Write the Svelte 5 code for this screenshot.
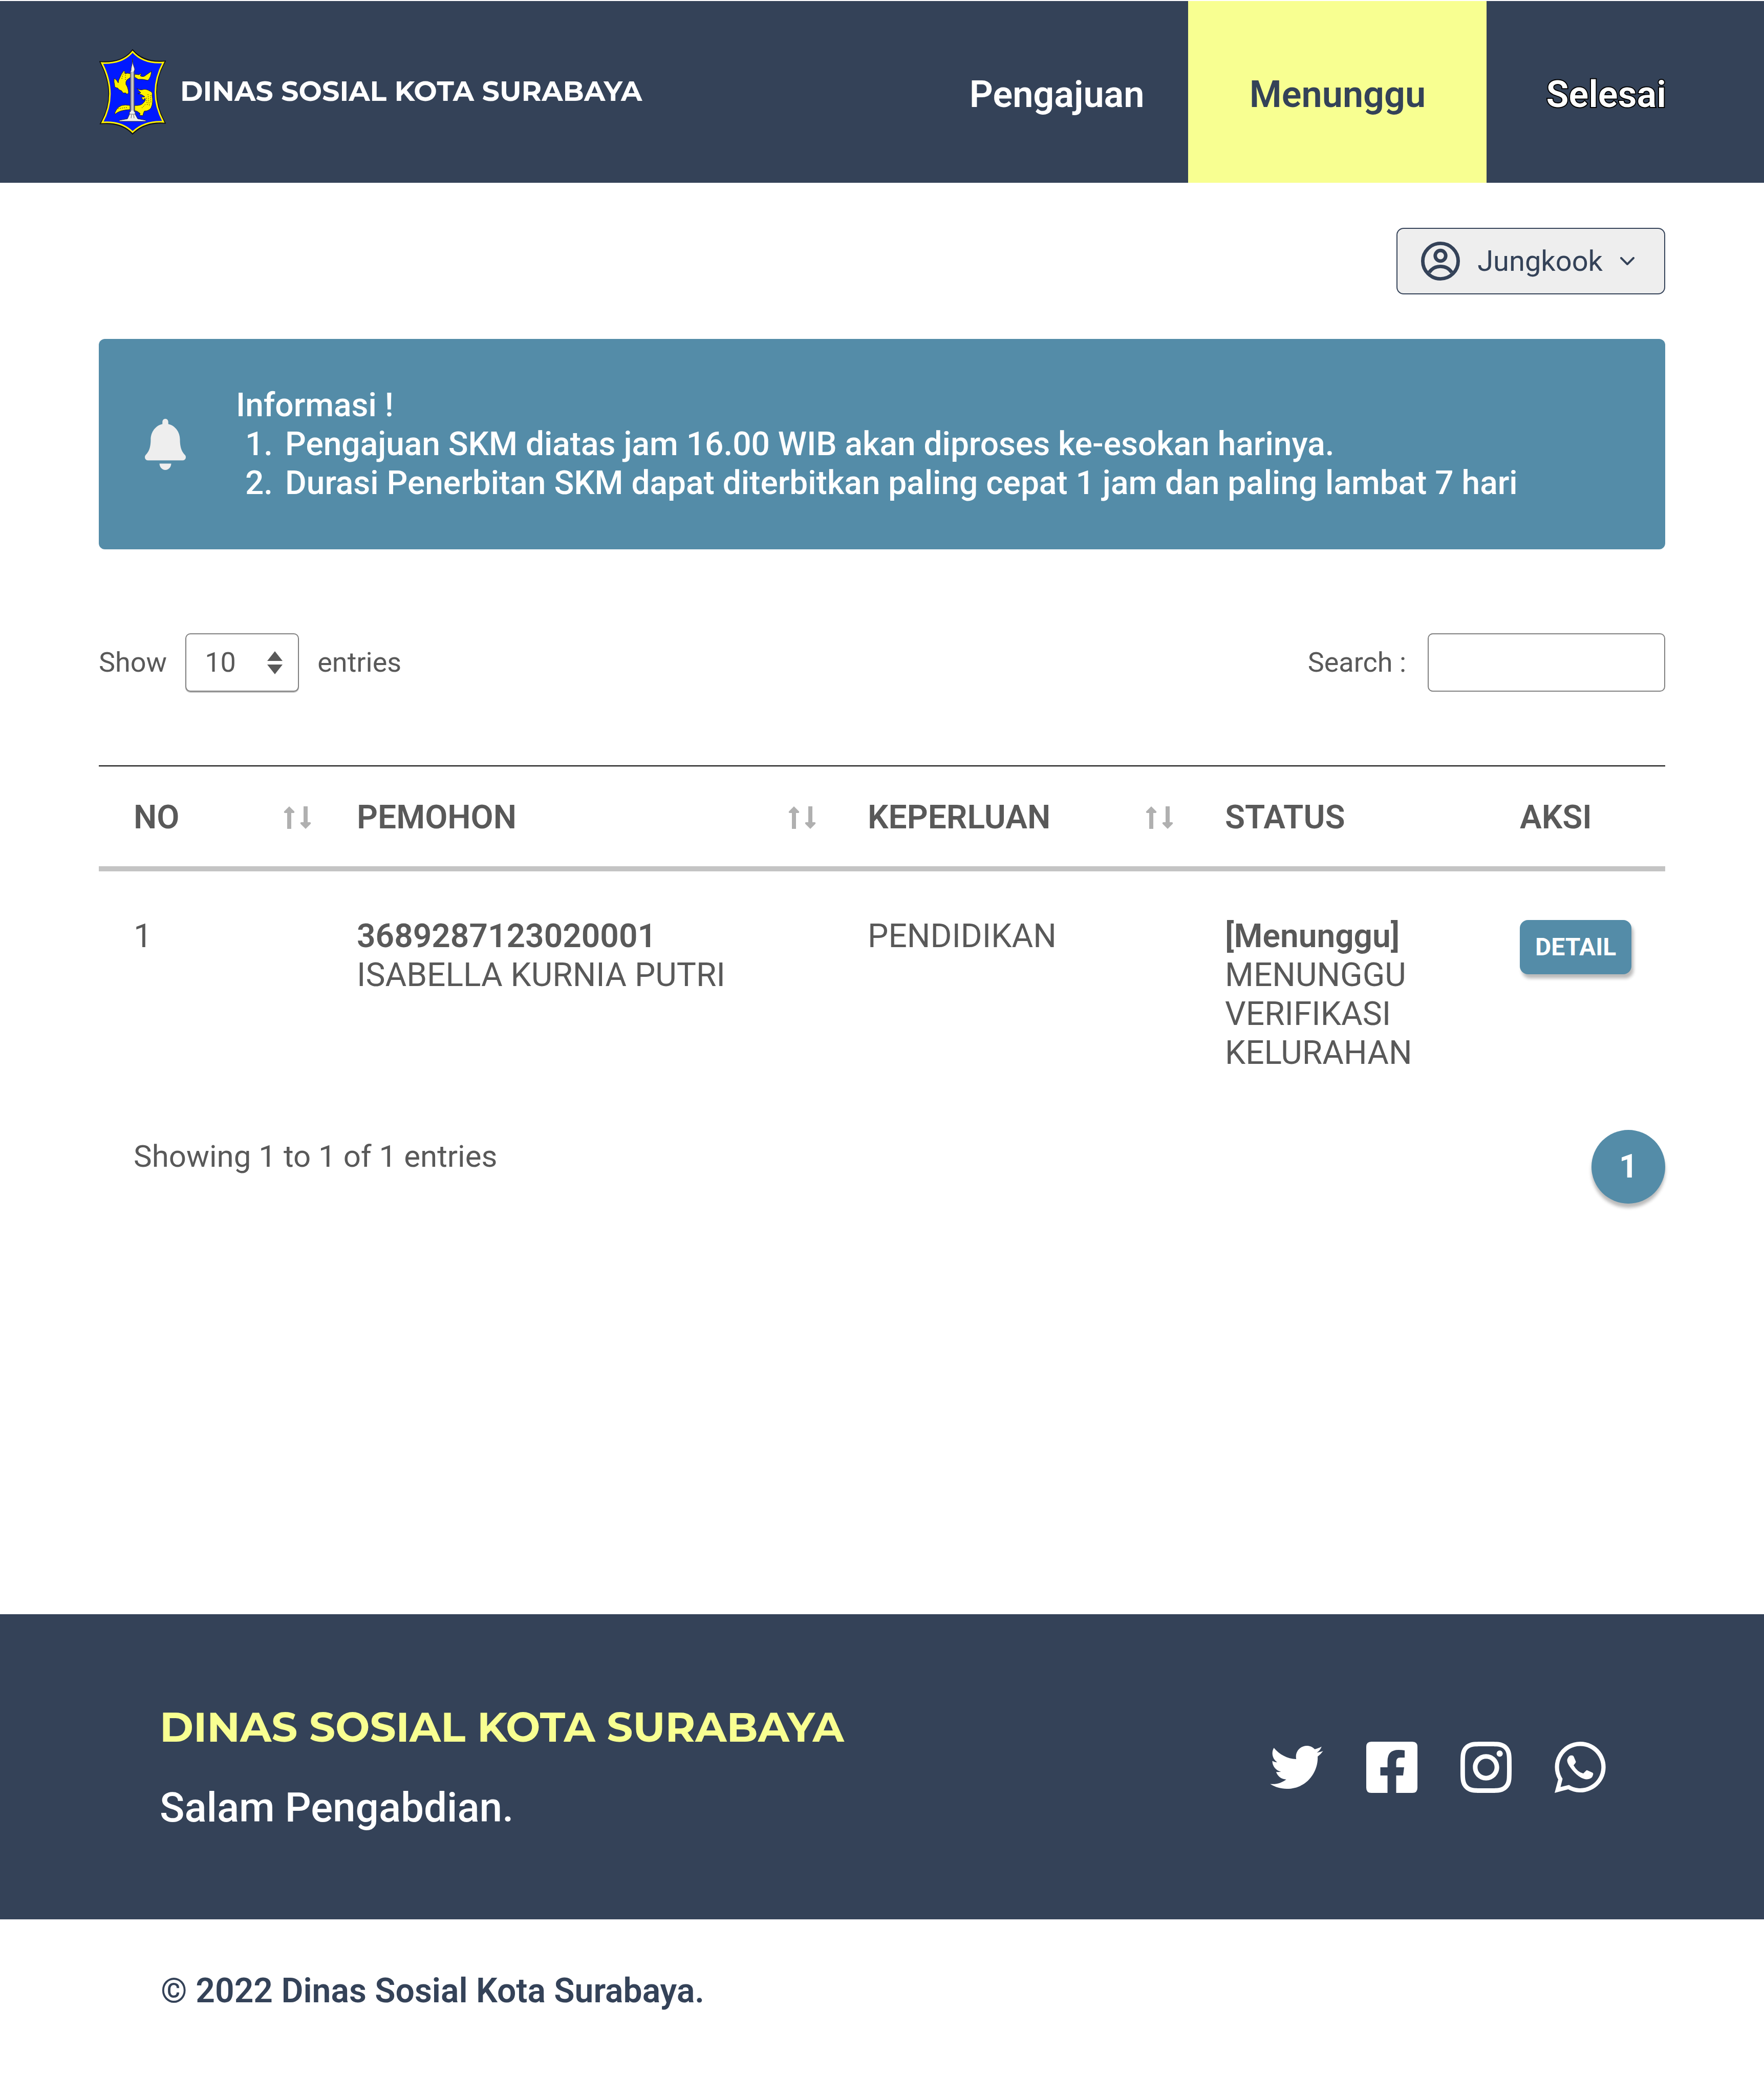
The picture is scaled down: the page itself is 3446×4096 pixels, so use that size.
<script>
  const cols = [
    { label: 'NO', sort: true },
    { label: 'PEMOHON', sort: true },
    { label: 'KEPERLUAN', sort: true },
    { label: 'STATUS', sort: false },
    { label: 'AKSI', sort: false }
  ];
  const rows = [
    { no: '1', nik: '3689287123020001', name: 'ISABELLA KURNIA PUTRI', need: 'PENDIDIKAN', state: '[Menunggu]', detail: 'MENUNGGU VERIFIKASI KELURAHAN' }
  ];
</script>

<header class="topbar">
  <a class="brand" href="#home">
    <svg class="crest" viewBox="0 0 130 167" aria-hidden="true">
      <path d="M65 2Q46 28 2 25Q36 88 3 145Q44 142 65 165Q88 142 128 144Q94 84 128 24Q86 27 65 2Z" fill="#0019ff" stroke="#111" stroke-width="3" />
      <path d="M65 5Q45 29 5 27Q36 88 6 143Q44 140 65 162Q88 140 125 142Q94 84 125 26Q86 29 65 5Z" fill="#0019ff" stroke="#fff200" stroke-width="3" />
      <g fill="#fff200" stroke="#222" stroke-width="1" stroke-linejoin="round">
        <path d="M61 48Q55 46 50 48Q51 44 48 42Q43 48 40 56Q37 61 37 66Q34 59 29 57Q28 64 30 71Q29 75 36 76Q38 80 43 81L47 86Q53 84 53 88Q58 87 57 84Q56 74 52 69Q51 63 54 60L61 55Z" />
        <path d="M69 49L78 50Q80 47 82 48L80 52Q86 56 92 50Q98 46 102 43Q101 55 95 61Q84 58 76 59Q72 56 69 55Z" />
        <path d="M73 76Q79 81 85 79Q91 77 99 82Q105 84 103 90Q106 104 101 115Q96 121 88 121Q86 124 85 130L78 129L80 126Q74 120 69 120V110Q82 111 86 105Q92 99 89 96Q87 98 86 100L82 94L89 93Q84 88 75 87Q80 87 81 85Q76 80 73 76Z" />
        <path d="M60 110Q40 106 33 119Q29 126 31 127Q39 119 60 118Z" />
      </g>
      <path d="M95 88L98 112M100 90L101 106M90 108L83 115M92 95L94 110M36 116L54 114M49 45Q44 52 44 60M51 46V60" stroke="#443f00" stroke-width="1" stroke-dasharray="2 2" fill="none" />
      <path d="M65 18L66 29L69 38V42H68V122H70V127L75 136L91 139V141H39V139L55 136L59 127V122H61V42H62V38L64 29Z" fill="#eee" stroke="#333" stroke-width="1" />
      <path d="M63 44V120M66 44V120M59 127H71M63 128L62 135M67 128L68 135" stroke="#666" stroke-width="1" />
    </svg>
    <span class="wordmark">DINAS SOSIAL KOTA SURABAYA</span>
  </a>
  <nav class="nav" aria-label="Utama">
    <a href="#pengajuan">Pengajuan</a>
    <a href="#menunggu" class="active" aria-current="page">Menunggu</a>
    <a href="#selesai" class="outlined">Selesai</a>
  </nav>
</header>

<main>
  <div class="account">
    <button class="user" type="button">
      <svg class="avatar" viewBox="2 2 20 20" aria-hidden="true">
        <circle cx="12" cy="12" r="9.1" />
        <circle cx="12" cy="9.25" r="2.7" />
        <path d="M6.2 17.8A7.04 7.04 0 0 1 17.8 17.8" />
      </svg>
      <span>Jungkook</span>
      <svg class="chevron" viewBox="0 0 28 16" aria-hidden="true"><path d="M2 2L14 14L26 2" /></svg>
    </button>
  </div>

  <section class="notice">
    <svg class="bell" viewBox="0 0 448 512" preserveAspectRatio="none" aria-hidden="true">
      <path d="M224 512c35.320 0 63.970-28.650 63.970-64H160.030c0 35.350 28.650 64 63.970 64zm215.390-149.710c-19.320-20.760-55.470-51.990-55.470-154.290 0-77.700-54.480-139.900-127.940-155.160V32c0-17.670-14.320-32-31.980-32s-31.980 14.330-31.980 32v20.840C118.560 68.100 64.080 130.300 64.080 208c0 102.300-36.150 133.530-55.470 154.290-6 6.450-8.660 14.160-8.610 21.710.11 16.400 12.980 32 32.100 32h383.800c19.120 0 32-15.600 32.100-32 .05-7.550-2.610-15.270-8.610-21.710z" />
    </svg>
    <div>
      <p>Informasi !</p>
      <ol>
        <li>Pengajuan SKM diatas jam 16.00 WIB akan diproses ke-esokan harinya.</li>
        <li>Durasi Penerbitan SKM dapat diterbitkan paling cepat 1 jam dan paling lambat 7 hari</li>
      </ol>
    </div>
  </section>

  <div class="controls">
    <div class="length">
      <label for="len">Show</label>
      <span class="picker">
        <select id="len"><option>10</option><option>25</option></select>
        <svg viewBox="0 0 30 45" aria-hidden="true"><path d="M15 0L30 19H0ZM0 26H30L15 45Z" /></svg>
      </span>
      <label for="len">entries</label>
    </div>
    <div class="search">
      <label for="q">Search :</label>
      <input id="q" type="search" />
    </div>
  </div>

  <table>
    <colgroup><col class="c1" /><col class="c2" /><col class="c3" /><col class="c4" /><col class="c5" /></colgroup>
    <thead>
      <tr>
        {#each cols as col}
          <th scope="col">
            <div class="head">
              <span>{col.label}</span>
              {#if col.sort}
                <button type="button" class="sort" aria-label="Urutkan {col.label}">
                  <svg viewBox="0 0 54 44" aria-hidden="true">
                    <path d="M11 0L21 10Q22 13 19 13H15V44H7V13H3Q0 13 1 10ZM39 0H47V31H51Q54 31 53 34L43 44L33 34Q32 31 35 31H39Z" />
                  </svg>
                </button>
              {/if}
            </div>
          </th>
        {/each}
      </tr>
    </thead>
    <tbody>
      {#each rows as row}
        <tr>
          <td>{row.no}</td>
          <td><strong>{row.nik}</strong>{row.name}</td>
          <td>{row.need}</td>
          <td><strong>{row.state}</strong><span class="state">{row.detail}</span></td>
          <td><button type="button" class="detail">DETAIL</button></td>
        </tr>
      {/each}
    </tbody>
  </table>

  <div class="paging">
    <p>Showing 1 to 1 of 1 entries</p>
    <button type="button" class="page" aria-current="page">1</button>
  </div>
</main>

<footer>
  <div class="band">
    <div>
      <h2>DINAS SOSIAL KOTA SURABAYA</h2>
      <p class="motto">Salam Pengabdian.</p>
    </div>
    <div class="social">
      <a href="#twitter" aria-label="Twitter">
        <svg class="bird" viewBox="0 48 512 416" aria-hidden="true"><path d="M459.370 151.716c.325 4.548.325 9.097.325 13.645 0 138.720-105.583 298.558-298.558 298.558-59.452 0-114.680-17.219-161.137-47.106 8.447.974 16.568 1.299 25.340 1.299 49.055 0 94.213-16.568 130.274-44.832-46.132-.975-84.792-31.188-98.112-72.772 6.498.974 12.995 1.624 19.818 1.624 9.421 0 18.843-1.300 27.614-3.573-48.081-9.747-84.143-51.980-84.143-102.985v-1.299c13.969 7.797 30.214 12.670 47.431 13.319-28.264-18.843-46.781-51.005-46.781-87.391 0-19.492 5.197-37.360 14.294-52.954 51.655 63.675 129.300 105.258 216.365 109.807-1.624-7.797-2.599-15.918-2.599-24.040 0-57.828 46.782-104.934 104.934-104.934 30.213 0 57.502 12.670 76.670 33.137 23.715-4.548 46.456-13.320 66.599-25.340-7.798 24.366-24.366 44.833-46.132 57.827 21.117-2.273 41.584-8.122 60.426-16.243-14.292 20.791-32.161 39.308-52.628 54.253z" /></svg>
      </a>
      <a href="#facebook" aria-label="Facebook">
        <svg viewBox="0 0 100 100" aria-hidden="true"><path d="M10 0H90Q100 0 100 10V90Q100 100 90 100H58.500V66H72L74 50H58.500V40Q58.500 31 66 31H75V17Q70 16 63 16Q41.500 16 41.500 38V50H27.500V66H41.500V100H10Q0 100 0 90V10Q0 0 10 0Z" /></svg>
      </a>
      <a href="#instagram" aria-label="Instagram">
        <svg viewBox="0 0 24 24" aria-hidden="true"><path d="M12 0C8.740 0 8.333.015 7.053.072 5.775.132 4.905.333 4.140.630c-.789.306-1.459.717-2.126 1.384S.935 3.350.630 4.140C.333 4.905.131 5.775.072 7.053.012 8.333 0 8.740 0 12s.015 3.667.072 4.947c.06 1.277.261 2.148.558 2.913.306.788.717 1.459 1.384 2.126.667.666 1.336 1.079 2.126 1.384.766.296 1.636.499 2.913.558C8.333 23.988 8.740 24 12 24s3.667-.015 4.947-.072c1.277-.06 2.148-.262 2.913-.558.788-.306 1.459-.718 2.126-1.384.666-.667 1.079-1.335 1.384-2.126.296-.765.499-1.636.558-2.913.06-1.280.072-1.687.072-4.947s-.015-3.667-.072-4.947c-.06-1.277-.262-2.149-.558-2.913-.306-.789-.718-1.459-1.384-2.126C21.319 1.347 20.651.935 19.860.630c-.765-.297-1.636-.499-2.913-.558C15.667.012 15.260 0 12 0zm0 2.160c3.203 0 3.585.016 4.850.071 1.170.055 1.805.249 2.227.415.562.217.960.477 1.382.896.419.420.679.819.896 1.381.164.422.360 1.057.413 2.227.057 1.266.070 1.646.070 4.850s-.015 3.585-.074 4.850c-.061 1.170-.256 1.805-.421 2.227-.224.562-.479.960-.899 1.382-.419.419-.824.679-1.380.896-.420.164-1.065.360-2.235.413-1.274.057-1.649.070-4.859.070-3.211 0-3.586-.015-4.859-.074-1.171-.061-1.816-.256-2.236-.421-.569-.224-.960-.479-1.379-.899-.421-.419-.690-.824-.900-1.380-.165-.420-.359-1.065-.420-2.235-.045-1.260-.061-1.649-.061-4.844 0-3.196.016-3.586.061-4.861.061-1.170.255-1.814.420-2.234.210-.570.479-.960.900-1.381.419-.419.810-.689 1.379-.898.420-.166 1.051-.361 2.221-.421 1.275-.045 1.650-.060 4.859-.060l.045.030zm0 3.678c-3.405 0-6.162 2.760-6.162 6.162 0 3.405 2.760 6.162 6.162 6.162 3.405 0 6.162-2.760 6.162-6.162 0-3.405-2.760-6.162-6.162-6.162zM12 16c-2.210 0-4-1.790-4-4s1.790-4 4-4 4 1.790 4 4-1.790 4-4 4zm7.846-10.405c0 .795-.646 1.440-1.440 1.440-.795 0-1.440-.646-1.440-1.440 0-.794.646-1.439 1.440-1.439.793-.001 1.440.645 1.440 1.439z" /></svg>
      </a>
      <a href="#whatsapp" aria-label="WhatsApp">
        <svg viewBox="0 0 100 100" aria-hidden="true">
          <path fill-rule="evenodd" d="M50 0A49.500 49.500 0 1 1 26.500 93L0 100L7 74A49.500 49.500 0 0 1 50 0ZM50 8.500A41.200 41.200 0 0 0 15.500 72.500L11.500 88.500L28 84.500A41.200 41.200 0 1 0 50 8.500Z" />
          <path d="M29.500 27.500Q31 26.500 35 27Q36.500 27 37.500 29.500L41.500 39Q42 40.500 37 46Q44 59 56 62L62 56Q63 55.500 64 56L74 60.500Q76 61.500 75 65Q73 73 63 73.500Q50 73 36 57Q24 43 24.500 36Q25 31 29.500 27.500Z" />
        </svg>
      </a>
    </div>
  </div>
  <p class="copy">© 2022 Dinas Sosial Kota Surabaya.</p>
</footer>

<style>
  :global(body) { background: #fff; }
  :global(#app) {
    min-height: 100vh;
    display: flex;
    flex-direction: column;
    font-family: Roboto, sans-serif;
    font-size: 64px;
    line-height: 76px;
    color: #595959;
  }
  p, h2, ol { margin: 0; }
  a { color: inherit; text-decoration: none; }
  button, input, select { font: inherit; color: inherit; }
  button { border: 0; padding: 0; cursor: pointer; }
  svg { display: block; fill: currentColor; }

  .topbar {
    display: flex;
    justify-content: space-between;
    margin-top: 2px;
    padding-left: 194px;
    background: #344258;
    color: #fff;
  }
  .brand { display: flex; align-items: center; gap: 28px; }
  .crest { width: 130px; height: 167px; }
  .wordmark { padding-bottom: 4px; font: 700 54px/68px Montserrat, Inter, sans-serif; }
  .nav { display: flex; font-size: 72px; font-weight: 600; line-height: 84px; }
  .nav a { display: flex; align-items: center; padding: 141px 86px 130px; }
  .nav .active { width: 583px; box-sizing: border-box; padding-inline: 0; justify-content: center; background: #f8ff91; color: #344258; }
  .nav .outlined { padding: 141px 191px 130px 116px; -webkit-text-stroke: 4px #000; paint-order: stroke fill; }

  main { flex: 1; padding: 88px 193px 0; }
  .account { display: flex; justify-content: flex-end; }
  .user {
    display: flex;
    align-items: center;
    height: 130px;
    padding: 0 58px 0 46px;
    border: 2px solid #344258;
    border-radius: 14px;
    background: #eee;
    color: #344258;
    font-size: 56px;
    gap: 34px;
  }
  .avatar, .chevron { fill: none; stroke: currentColor; }
  .avatar { width: 76px; height: 76px; stroke-width: 1.8; }
  .chevron { width: 28px; height: 16px; stroke-width: 4; stroke-linecap: round; stroke-linejoin: round; }

  .notice {
    display: flex;
    align-items: center;
    gap: 98px;
    margin-top: 87px;
    padding: 92px 90px 91px;
    border-radius: 12px;
    background: #548ca8;
    color: #fff;
    font-weight: 500;
  }
  .bell { flex: none; width: 80px; height: 100px; color: #eee; }
  ol { padding-left: 88px; }
  li { padding-left: 8px; }

  .controls { display: flex; justify-content: space-between; margin-top: 164px; font-size: 54px; }
  .length, .search { display: flex; align-items: center; gap: 36px; }
  .search { gap: 42px; }
  .picker { display: grid; align-items: center; width: 222px; }
  .picker select, .picker svg { grid-area: 1 / 1; }
  .picker svg { width: 30px; height: 45px; justify-self: end; margin-right: 32px; pointer-events: none; }
  select, input {
    box-sizing: border-box;
    height: 114px;
    border: 2px solid #7f7f7f;
    border-radius: 10px;
    background: #fff;
    appearance: none;
  }
  select { width: 100%; padding: 0 36px; box-shadow: 0 2px 1px #bbb; }
  input { width: 464px; padding: 0 24px; }

  table { width: 100%; margin-top: 144px; border-collapse: separate; border-spacing: 0; table-layout: fixed; border-top: 2px solid #000; }
  .c1 { width: 471px; }
  .c2 { width: 998px; }
  .c3 { width: 698px; }
  .c5 { width: 317px; }
  th, td { padding: 0 0 0 33px; text-align: left; vertical-align: top; }
  th:first-child, td:first-child { padding-left: 68px; }
  th { font-weight: 600; border-bottom: 10px solid #c4c4c4; }
  .head { display: flex; align-items: center; justify-content: space-between; padding: 62px 68px 57px 0; }
  th:first-child .head { padding-right: 56px; }
  .sort { background: none; color: #b0b0b0; }
  .sort svg { width: 54px; height: 44px; }
  td { padding-top: 89px; }
  strong { display: block; font-weight: 600; }
  .state { display: block; max-width: 400px; }
  .detail {
    display: block;
    margin-top: 6px;
    padding: 0 30px;
    height: 106px;
    border-radius: 16px;
    background: #548ca8;
    box-shadow: 4px 8px 6px #bbb;
    color: #fff;
    font-size: 48px;
    font-weight: 700;
  }

  .paging { display: flex; justify-content: space-between; margin-top: 112px; padding-left: 68px; font-size: 60px; }
  .paging p { padding-top: 14px; }
  .page {
    width: 144px;
    height: 144px;
    border-radius: 50%;
    background: #548ca8;
    box-shadow: 0 8px 6px #bbb;
    color: #fff;
    font-size: 64px;
    font-weight: 700;
  }

  .band {
    display: flex;
    align-items: center;
    justify-content: space-between;
    padding: 173px 309px 171px 312px;
    background: #344258;
    color: #fff;
  }
  h2 { font: 700 80px/96px Montserrat, Inter, sans-serif; color: #f8ff91; }
  .motto { margin-top: 62px; font-size: 80px; font-weight: 500; line-height: 94px; }
  .social { display: flex; align-items: center; gap: 84px; }
  .social svg { width: 100px; height: 100px; }
  .social .bird { width: 104px; height: 84px; }
  .copy { padding: 102px 314px 169px; font-size: 66px; font-weight: 600; color: #344258; }
</style>
